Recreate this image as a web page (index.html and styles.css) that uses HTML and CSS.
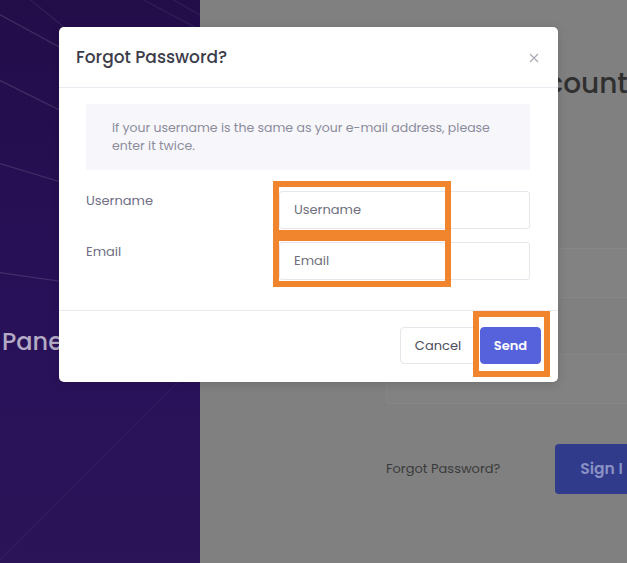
FILE: index.html
```html
<!DOCTYPE html>
<html lang="en">
<head>
<meta charset="utf-8">
<title>Forgot Password</title>
<link rel="stylesheet" href="styles.css">
</head>
<body>
<div class="page">
  <aside class="side">
    <svg class="side-lines" width="200" height="563" viewBox="0 0 200 563" aria-hidden="true">
      <line x1="-5" y1="12" x2="120" y2="80" />
      <line x1="-5" y1="78" x2="120" y2="140" />
      <line x1="-5" y1="162" x2="120" y2="200" />
      <line x1="-5" y1="272" x2="120" y2="290" />
      <line x1="28" y1="-2" x2="80" y2="40" class="faint" />
      <line x1="140" y1="-2" x2="200" y2="30" class="faint" />
      <line x1="170" y1="-2" x2="200" y2="15" class="faint" />
      <line x1="0" y1="560" x2="200" y2="360" class="fainter" />
    </svg>
    <div class="side-title">Panel</div>
  </aside>
  <main class="main">
    <h1 class="main-title">Login to your Account</h1>
    <div class="bg-field bg-field-1"></div>
    <div class="bg-field bg-field-2"></div>
    <div class="bg-actions">
      <span class="bg-link">Forgot Password?</span>
      <span class="bg-btn">Sign I</span>
    </div>
  </main>
</div>

<div class="modal">
  <div class="modal-header">
    <h2 class="modal-title">Forgot Password?</h2>
    <button class="modal-close" aria-label="Close">
      <svg width="10" height="10" viewBox="0 0 10 10"><path d="M1 1L9 9M9 1L1 9" /></svg>
    </button>
  </div>
  <div class="modal-body">
    <div class="info">If your username is the same as your e-mail address, please enter it twice.</div>
    <div class="form-row">
      <label class="form-label">Username</label>
      <input class="form-input" type="text" placeholder="Username">
    </div>
    <div class="form-row">
      <label class="form-label">Email</label>
      <input class="form-input" type="text" placeholder="Email">
    </div>
  </div>
  <div class="modal-footer">
    <button class="btn btn-cancel">Cancel</button>
    <button class="btn btn-send">Send</button>
  </div>
</div>

<div class="mark mark-user"></div>
<div class="mark mark-email"></div>
<div class="mark mark-send"></div>
</body>
</html>
```

FILE: styles.css
```css
* { box-sizing: border-box; }
html, body {
  margin: 0;
  padding: 0;
  width: 627px;
  height: 563px;
  overflow: hidden;
  font-family: "Poppins", "Inter", "Noto Sans", sans-serif;
}
.page {
  display: grid;
  grid-template-columns: 200px 1fr;
  height: 563px;
}
.side {
  position: relative;
  background: linear-gradient(180deg, #230d49 0%, #29115a 60%, #2c1458 100%);
  overflow: hidden;
  padding-top: 324px;
}
.side-lines {
  position: absolute;
  left: 0;
  top: 0;
}
.side-lines line {
  stroke: rgba(255,255,255,0.13);
  stroke-width: 1.2;
}
.side-lines line.faint { stroke: rgba(255,255,255,0.07); }
.side-lines line.fainter { stroke: rgba(255,255,255,0.04); }
.side-title {
  position: relative;
  padding-left: 2px;
  font-size: 24px;
  font-weight: 500;
  color: #b3abc3;
  white-space: nowrap;
}
.main {
  background: #808080;
  padding-left: 186px;
  padding-top: 64px;
  overflow: hidden;
}
.main-title {
  margin: 0 0 0 -64px;
  font-size: 28px;
  line-height: 40px;
  font-weight: 500;
  color: #2f2f2f;
  white-space: nowrap;
}
.bg-field {
  height: 50px;
  background: #828282;
  border: 1px solid #868686;
  border-right: none;
  border-radius: 4px 0 0 4px;
}
.bg-field-1 { margin-top: 144px; }
.bg-field-2 { margin-top: 56px; }
.bg-actions {
  margin-top: 40px;
  display: flex;
  align-items: center;
  gap: 55px;
}
.bg-link {
  font-size: 13px;
  color: #3a3a3a;
  white-space: nowrap;
}
.bg-btn {
  flex: 1;
  height: 50px;
  background: #313b8c;
  border-radius: 4px 0 0 4px;
  color: #8a91c4;
  font-size: 15.5px;
  font-weight: 600;
  padding-left: 25px;
  line-height: 50px;
  white-space: nowrap;
}

/* modal */
.modal {
  position: absolute;
  left: 59px;
  top: 27px;
  width: 499px;
  background: #fff;
  border-radius: 5px;
  box-shadow: 0 2px 10px rgba(0,0,0,0.15);
}
.modal-header {
  height: 61px;
  display: flex;
  align-items: center;
  justify-content: space-between;
  padding: 0 19px 0 17px;
  border-bottom: 1px solid #eaeaf0;
}
.modal-title {
  margin: 0;
  font-size: 17px;
  font-weight: 500;
  color: #3c3c4b;
}
.modal-close {
  border: 0;
  background: none;
  padding: 0;
  margin-top: 2px;
  width: 10px;
  height: 10px;
  display: flex;
}
.modal-close path {
  stroke: #a8a8b0;
  stroke-width: 1.1;
  fill: none;
}
.modal-body {
  padding: 16px 28px 30px 27px;
}
.info {
  background: #f7f7fb;
  border-radius: 2px;
  padding: 15px 26px;
  font-size: 12.5px;
  line-height: 18px;
  color: #8b8b9c;
}
.form-row {
  display: grid;
  grid-template-columns: 193px minmax(0, 1fr);
  align-items: start;
  margin-top: 21px;
}
.form-row + .form-row { margin-top: 13px; }
.form-label {
  font-size: 13px;
  line-height: 18px;
  padding-top: 1px;
  color: #6e6e84;
}
.form-input {
  width: 100%;
  min-width: 0;
  height: 38px;
  border: 1px solid #e6e6ec;
  border-radius: 3px;
  padding: 0 14px;
  font-family: inherit;
  font-size: 13px;
  color: #444;
  background: #fff;
  outline: none;
}
.form-input::placeholder { color: #6f6f7d; }
.modal-footer {
  border-top: 1px solid #eaeaf0;
  height: 72px;
  display: flex;
  align-items: center;
  justify-content: flex-end;
  gap: 4px;
  padding: 0 17px 2px 0;
}
.btn {
  height: 37px;
  border-radius: 4px;
  font-family: inherit;
  font-size: 13px;
  cursor: pointer;
}
.btn-cancel {
  width: 76px;
  background: #fff;
  border: 1px solid #e6e6ec;
  color: #4c4c5c;
}
.btn-send {
  width: 61px;
  background: #5562dc;
  border: 1px solid #5562dc;
  color: #fff;
  font-weight: 600;
}

/* orange annotation marks */
.mark {
  position: absolute;
  border: 6px solid #f0852d;
}
.mark-user { left: 273px; top: 181px; width: 178px; height: 55px; }
.mark-email { left: 273px; top: 235px; width: 178px; height: 52px; }
.mark-send { left: 473px; top: 311px; width: 77px; height: 66px; }
```
